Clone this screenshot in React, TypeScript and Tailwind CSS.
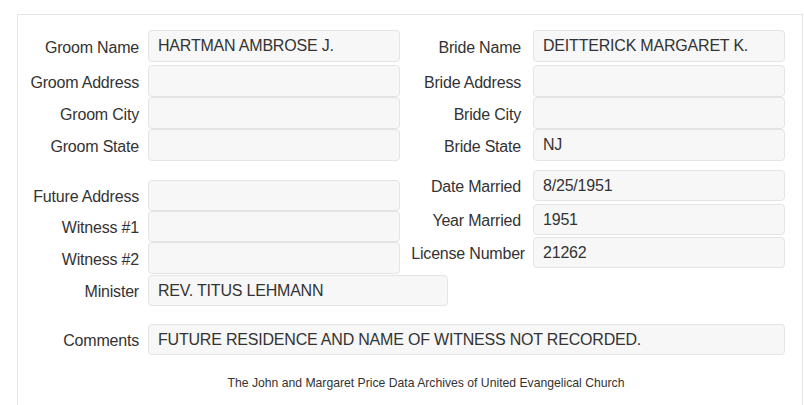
import React from "react"

const font = { fontFamily: '"Liberation Sans", Arial, sans-serif' }

interface FieldProps {
  label: string
  value?: string
  height?: string
  inputWidth?: string
  labelClass?: string
  gap?: string
  className?: string
}

function Field({ label, value = "", height = "h-[32px]", inputWidth = "w-[252px]", labelClass = "", gap = "mr-[9px]", className = "" }: FieldProps) {
  return (
    <div className={`flex items-center ${className}`}>
      <div className={`w-[121px] shrink-0 whitespace-nowrap text-right pt-[3px] ${gap} ${labelClass}`}>{label}</div>
      <div
        className={`${inputWidth} ${height} shrink-0 flex items-center rounded-[4px] border border-[#e4e4e4] bg-[#f7f7f7] pl-[9px] whitespace-nowrap`}
      >
        {value}
      </div>
    </div>
  )
}

export default function App() {
  return (
    <div className="bg-white w-[805px] h-[405px] overflow-hidden pt-[14px] pl-[17px] text-[16px] tracking-[-0.2px] text-[#333]" style={font}>
      <div className="w-[786px] h-[420px] border border-[#e4e4e4] pt-[15px]">
        {/* bride / groom */}
        <div className="flex">
          <div className="w-[382px] flex flex-col">
            <Field label="Groom Name" value="HARTMAN AMBROSE J." className="mb-[3px]" />
            <Field label="Groom Address" />
            <Field label="Groom City" />
            <Field label="Groom State" />
          </div>
          <div className="flex flex-col">
            <Field label="Bride Name" value="DEITTERICK MARGARET K." gap="mr-[12px]" className="mb-[3px]" />
            <Field label="Bride Address" gap="mr-[12px]" />
            <Field label="Bride City" gap="mr-[12px]" />
            <Field label="Bride State" value="NJ" gap="mr-[12px]" />
          </div>
        </div>

        {/* marriage details */}
        <div className="flex mt-[9px]">
          <div className="w-[382px] flex flex-col pt-[10px]">
            <Field label="Future Address" height="h-[31px]" />
            <Field label="Witness #1" height="h-[31px]" />
            <Field label="Witness #2" height="h-[32px]" />
          </div>
          <div className="flex flex-col">
            <Field label="Date Married" value="8/25/1951" height="h-[31px]" gap="mr-[12px]" className="mb-[3px]" />
            <Field label="Year Married" value="1951" height="h-[31px]" gap="mr-[12px]" className="mb-[2px]" />
            <Field label="License Number" value="21262" height="h-[31px]" gap="mr-[12px]" labelClass="translate-x-[4px]" />
          </div>
        </div>
        <Field label="Minister" value="REV. TITUS LEHMANN" height="h-[31px]" inputWidth="w-[300px]" className="mt-[1px]" />

        <Field
          label="Comments"
          value="FUTURE RESIDENCE AND NAME OF WITNESS NOT RECORDED."
          height="h-[31px]"
          inputWidth="w-[637px]"
          className="mt-[18px]"
        />

        <p className="mt-[20px] text-center text-[12.2px] tracking-normal leading-[17px] pl-[32px]">
          The John and Margaret Price Data Archives of United Evangelical Church
        </p>
      </div>
    </div>
  )
}
